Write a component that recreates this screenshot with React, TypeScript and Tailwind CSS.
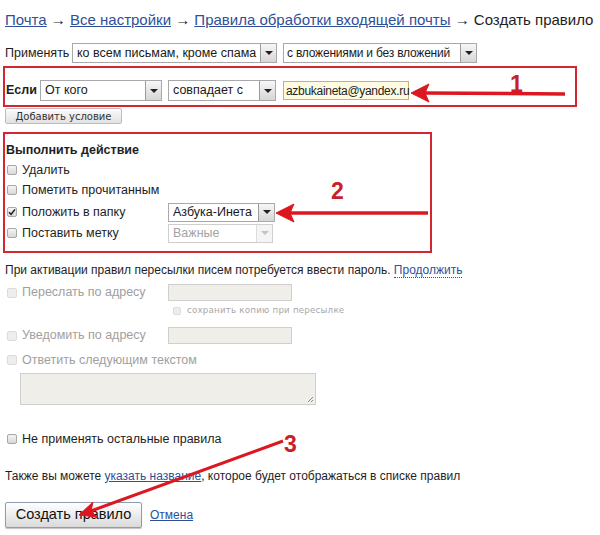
import React from 'react';

const Arrow = () => (
  <span className="flex h-full w-[16px] shrink-0 items-center justify-center border-l border-[#9a9a9a] bg-gradient-to-b from-[#f7f7f7] to-[#d6d6d6]">
    <span className="h-0 w-0 border-x-[4px] border-t-[4px] border-x-transparent border-t-[#222]" />
  </span>
);

const Select = ({ value, width, disabled, tight }: { value: string; width: string; disabled?: boolean; tight?: boolean }) => (
  <div
    className={`flex h-full items-center justify-between border ${
      disabled ? 'border-[#cfcfcf] text-[#a3a3a3]' : 'border-[#a9a9a9] text-[#1a1a1a]'
    } bg-white ${width}`}
  >
    <span className={`whitespace-nowrap leading-none ${tight ? 'pl-[3px] text-[12px] tracking-[-0.2px]' : 'pl-[4px] text-[12.5px]'}`}>
      {value}
    </span>
    {disabled ? (
      <span className="flex h-full w-[16px] items-center justify-center border-l border-[#dcdcdc] bg-[#f4f4f4]">
        <span className="h-0 w-0 border-x-[4px] border-t-[4px] border-x-transparent border-t-[#c4c4c4]" />
      </span>
    ) : (
      <Arrow />
    )}
  </div>
);

const Box = ({ checked, disabled, small }: { checked?: boolean; disabled?: boolean; small?: boolean }) => (
  <span
    className={`flex shrink-0 items-center justify-center rounded-[2px] border ${
      small ? 'h-[8px] w-[8px]' : 'h-[10px] w-[10px]'
    } ${
      disabled
        ? 'border-[#dcdcdc] bg-[#ededed]'
        : 'border-[#a8a8a8] bg-gradient-to-b from-[#f4f4f4] to-[#d8d8d8]'
    }`}
  >
    {checked && (
      <svg width="8" height="8" viewBox="0 0 8 8">
        <path d="M1 4.2 L3.1 6.3 L7 1.4" fill="none" stroke="#222" strokeWidth="1.5" />
      </svg>
    )}
  </span>
);

const CheckRow = ({ label, checked, disabled, children }: { label: string; checked?: boolean; disabled?: boolean; children?: React.ReactNode }) => (
  <div className="flex h-[20px] items-center">
    <div className="flex w-[163px] items-center gap-[5px] pl-[2px]">
      <Box checked={checked} disabled={disabled} />
      <span className={disabled ? 'text-[#a0a0a0]' : ''}>{label}</span>
    </div>
    {children}
  </div>
);

const Overlay = () => (
  <svg className="pointer-events-none absolute inset-0" width="600" height="535" viewBox="0 0 600 535">
    <g fill="#dc1720" stroke="#dc1720">
      <line x1="424" y1="93" x2="565" y2="94" strokeWidth="3.5" />
      <polygon points="411,93 429,84 425,93 429,102" strokeWidth="1" />
      <line x1="289" y1="213" x2="428" y2="213" strokeWidth="3.5" />
      <polygon points="276,213 294,204 290,213 294,222" strokeWidth="1" />
      <line x1="91" y1="511" x2="283" y2="441" strokeWidth="3" />
      <polygon points="79,515 97,517 91,511 93,502" strokeWidth="1" />
    </g>
    <g fill="#c9202a" fontFamily="'Liberation Sans', Arial, sans-serif" fontWeight="bold" fontSize="23">
      <text x="510" y="92">1</text>
      <text x="331" y="199">2</text>
      <text x="284" y="452">3</text>
    </g>
  </svg>
);

export default function App() {
  return (
    <div className="relative h-[535px] w-[600px] overflow-hidden bg-white px-[3px] font-['Liberation_Sans',Arial,sans-serif] text-[12px] text-[#1e1e1e]">
      <div className="mt-[10px] h-[20px] whitespace-nowrap pl-[2px] text-[15px] leading-[20px]">
        <span className="text-[#2f4f98] underline">Почта</span> → <span className="text-[#2f4f98] underline">Все настройки</span> →{' '}
        <span className="text-[#2f4f98] underline">Правила обработки входящей почты</span> → Создать правило
      </div>

      <div className="mt-[13px] flex h-[20px] items-center pl-[2px]">
        <span className="w-[67px] text-[12.5px]">Применять</span>
        <Select value="ко всем письмам, кроме спама" width="w-[205px]" />
        <span className="w-[6px]" />
        <Select value="с вложениями и без вложений" width="w-[194px]" tight />
      </div>

      <div className="mt-[3px] h-[41px] w-[574px] border-2 border-[#d3262e] pt-[12px]">
        <div className="flex h-[21px] items-center">
          <span className="w-[35px] pl-[1px] text-[12.5px] font-bold">Если</span>
          <Select value="От кого" width="w-[122px]" />
          <span className="w-[6px]" />
          <Select value="совпадает с" width="w-[108px]" />
          <span className="w-[7px]" />
          <div className="flex h-[19px] w-[126px] items-center border border-[#c9b56a] bg-[#fffbe1] pl-[2px] text-[12px] tracking-[-0.3px]">
            azbukaineta@yandex.ru
          </div>
        </div>
      </div>

      <div className="ml-[2px] mt-[1px] flex h-[16px] w-[117px] items-center justify-center rounded-[2px] border border-[#bdbdbd] bg-gradient-to-b from-[#fbfbfb] to-[#e2e2e2] font-['DejaVu_Sans',sans-serif] text-[10px] text-[#333]">
        Добавить условие
      </div>

      <div className="mt-[8px] h-[121px] w-[429px] border-2 border-[#d3262e] pt-[7px]">
        <div className="h-[18px] pl-[1px] text-[12.5px] font-bold leading-[18px]">Выполнить действие</div>
        <div className="mt-[1px] text-[12.5px]">
          <CheckRow label="Удалить" />
          <CheckRow label="Пометить прочитанным" />
          <div className="mt-[2px]">
            <CheckRow label="Положить в папку" checked>
              <div className="h-[19px]">
                <Select value="Азбука-Инета" width="w-[107px]" />
              </div>
            </CheckRow>
          </div>
          <div className="mt-[1px]">
            <CheckRow label="Поставить метку">
              <div className="h-[19px]">
                <Select value="Важные" width="w-[105px]" disabled />
              </div>
            </CheckRow>
          </div>
        </div>
      </div>

      <div className="mt-[8px] h-[18px] whitespace-nowrap pl-[2px] leading-[18px]">
        При активации правил пересылки писем потребуется ввести пароль.{' '}
        <span className="border-b border-dotted border-[#2f4f98] text-[#2f4f98]">Продолжить</span>
      </div>

      <div className="mt-[5px] flex h-[17px] items-center pl-[2px] text-[12.5px]">
        <div className="flex w-[163px] items-center gap-[5px] pl-[2px]">
          <Box disabled />
          <span className="text-[#a0a0a0]">Переслать по адресу</span>
        </div>
        <div className="h-[17px] w-[124px] border border-[#cfcfcf] bg-[#efeee9]" />
      </div>

      <div className="ml-[168px] mt-[3px] flex h-[14px] items-center gap-[6px] pl-[2px]">
        <Box disabled small />
        <span className="font-['DejaVu_Sans',sans-serif] text-[8.7px] tracking-[0.2px] text-[#a8a8a8]">сохранить копию при пересылке</span>
      </div>

      <div className="mt-[9px] flex h-[17px] items-center pl-[2px] text-[12.5px]">
        <div className="flex w-[163px] items-center gap-[5px] pl-[2px]">
          <Box disabled />
          <span className="text-[#a0a0a0]">Уведомить по адресу</span>
        </div>
        <div className="h-[17px] w-[124px] border border-[#cfcfcf] bg-[#efeee9]" />
      </div>

      <div className="mt-[7px] flex h-[18px] items-center gap-[5px] pl-[4px] text-[12.5px]">
        <Box disabled />
        <span className="text-[#a0a0a0]">Ответить следующим текстом</span>
      </div>

      <div className="relative ml-[17px] mt-[4px] h-[32px] w-[296px] border border-[#cfcfcf] bg-[#efeee9]">
        <svg className="absolute bottom-[1px] right-[1px]" width="7" height="7" viewBox="0 0 7 7">
          <path d="M6 1 L1 6 M6 4 L4 6" stroke="#8a8a8a" strokeWidth="1" />
        </svg>
      </div>

      <div className="mt-[25px] flex h-[18px] items-center gap-[5px] pl-[4px] text-[12.5px]">
        <Box />
        <span>Не применять остальные правила</span>
      </div>

      <div className="mt-[19px] h-[18px] whitespace-nowrap pl-[2px] leading-[18px]">
        Также вы можете <span className="text-[#2f4f98] underline">указать название</span>, которое будет отображаться в списке правил
      </div>

      <div className="mt-[17px] flex items-center gap-[8px] pl-[2px]">
        <div className="flex h-[26px] w-[137px] items-center justify-center rounded-[2px] border border-[#8f9db3] bg-gradient-to-b from-[#ffffff] to-[#dadada] text-[14.5px] text-[#111] shadow-[0_1px_1px_rgba(0,0,0,0.25)]">
          Создать правило
        </div>
        <span className="text-[#2f4f98] underline">Отмена</span>
      </div>

      <Overlay />
    </div>
  );
}
